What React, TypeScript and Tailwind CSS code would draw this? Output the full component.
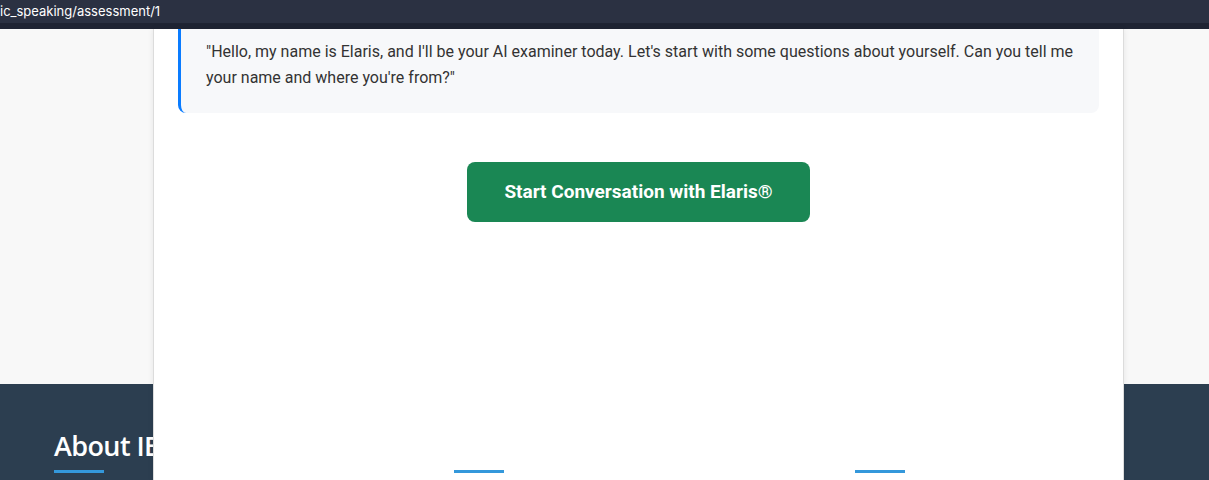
const footerCols = ['About IB', 'Quick Links', 'Contact'];

export default function App() {
  return (
    <div className="flex h-[480px] w-full flex-col overflow-hidden bg-[#f8f8f8] font-['Roboto',sans-serif]">
      <div className="flex h-[23px] shrink-0 items-center bg-[#2b3142] font-['Inter',sans-serif] text-[13px] text-white">
        ic_speaking/assessment/1
      </div>
      <div className="h-[6px] shrink-0 bg-[#1f2433]" />

      <main className="relative z-10 h-[355px] shrink-0">
        <div className="ml-[153px] h-[451px] w-[971px] border-x border-[#dcdcdc] bg-white px-6 shadow-[0_0_6px_rgba(0,0,0,0.08)]">
          <div className="rounded-b-lg border-l-[3px] border-[#0a7cff] bg-[#f7f8fa] pt-[10px] pb-[22px] pl-[25px] pr-6 text-[16px] leading-[26px] text-[#333]">
            "Hello, my name is Elaris, and I'll be your AI examiner today. Let's start with some questions about yourself. Can you tell me your name and where you're from?"
          </div>
          <div className="flex justify-center pt-[49px]">
            <button className="h-[60px] w-[343px] rounded-lg bg-[#1a8754] text-[19px] font-bold text-white">
              Start Conversation with Elaris®
            </button>
          </div>
        </div>
      </main>

      <footer className="flex-1 bg-[#2c3e50] pl-[54px] pt-[44px]">
        <div className="grid grid-cols-[400px_401px_300px]">
          {footerCols.map((title, i) => (
            <div key={title} className="flex flex-col">
              <h3
                className={
                  i === 0
                    ? "font-['Open_Sans',sans-serif] text-[27px] font-semibold leading-[36px] tracking-[-0.6px] text-white"
                    : "font-['Open_Sans',sans-serif] text-[27px] font-semibold leading-[36px] tracking-[-0.6px] text-white opacity-0"
                }
              >
                {title}
              </h3>
              <div className="relative z-20 mt-[6px] h-[3px] w-[50px] bg-[#3498db]" />
            </div>
          ))}
        </div>
      </footer>
    </div>
  );
}
